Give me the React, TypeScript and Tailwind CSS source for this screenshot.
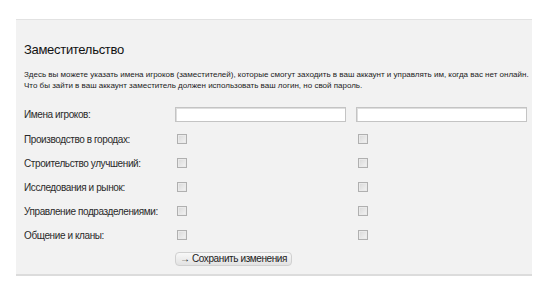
import React from "react";

const labels = [
  "Производство в городах:",
  "Строительство улучшений:",
  "Исследования и рынок:",
  "Управление подразделениями:",
  "Общение и кланы:",
];

function Box() {
  return (
    <div className="w-[10px] h-[10px] border border-[#b0b0b0] bg-[linear-gradient(135deg,#d8d8d8,#f4f4f4)] shadow-[inset_0_0_0_1px_#eaeaea]" />
  );
}

export default function App() {
  return (
    <div className="w-[550px] h-[288px] bg-white pt-[19px] pl-[16px] font-['Liberation_Sans',Arial,sans-serif] text-[#222]">
      <div className="w-[516px] h-[257px] bg-[#f2f2f2] border-t border-t-[#e2e2e2] border-b-2 border-b-[#dcdcdc] pl-[8px] pr-[5px]">
        <div className="pt-[22px] text-[13px] leading-[16px] tracking-[-0.3px] text-[#111]">Заместительство</div>
        <div className="mt-[11px] text-[8px] leading-[11px] whitespace-nowrap text-[#222]">
          Здесь вы можете указать имена игроков (заместителей), которые смогут заходить в ваш аккаунт и управлять им, когда вас нет онлайн.
          <br />
          Что бы зайти в ваш аккаунт заместитель должен использовать ваш логин, но свой пароль.
        </div>
        <div className="mt-[10px] grid grid-cols-[141px_171px_171px] gap-x-[10px] text-[10px] tracking-[-0.4px] text-[#2a2a2a]">
          <div className="h-[26px] flex items-center">Имена игроков:</div>
          <div className="h-[26px] flex items-center">
            <div className="w-full h-[15px] bg-white border border-[#c4c4c4] shadow-[inset_1px_1px_0_#dedede]" />
          </div>
          <div className="h-[26px] flex items-center">
            <div className="w-full h-[15px] bg-white border border-[#c4c4c4] shadow-[inset_1px_1px_0_#dedede]" />
          </div>
          {labels.map((l) => (
            <React.Fragment key={l}>
              <div className="h-[24px] flex items-center">{l}</div>
              <div className="h-[24px] flex items-center pl-[2px]">
                <Box />
              </div>
              <div className="h-[24px] flex items-center pl-[2px]">
                <Box />
              </div>
            </React.Fragment>
          ))}
          <div />
          <div className="pt-[5px] col-span-2">
            <button className="h-[14px] px-[4px] rounded-[4px] border border-[#d0d0d0] bg-[linear-gradient(#f8f8f8,#e2e2e2)] text-[10px] leading-[12px] tracking-[-0.4px] text-[#222] flex items-center">
              → Сохранить изменения
            </button>
          </div>
        </div>
      </div>
    </div>
  );
}
